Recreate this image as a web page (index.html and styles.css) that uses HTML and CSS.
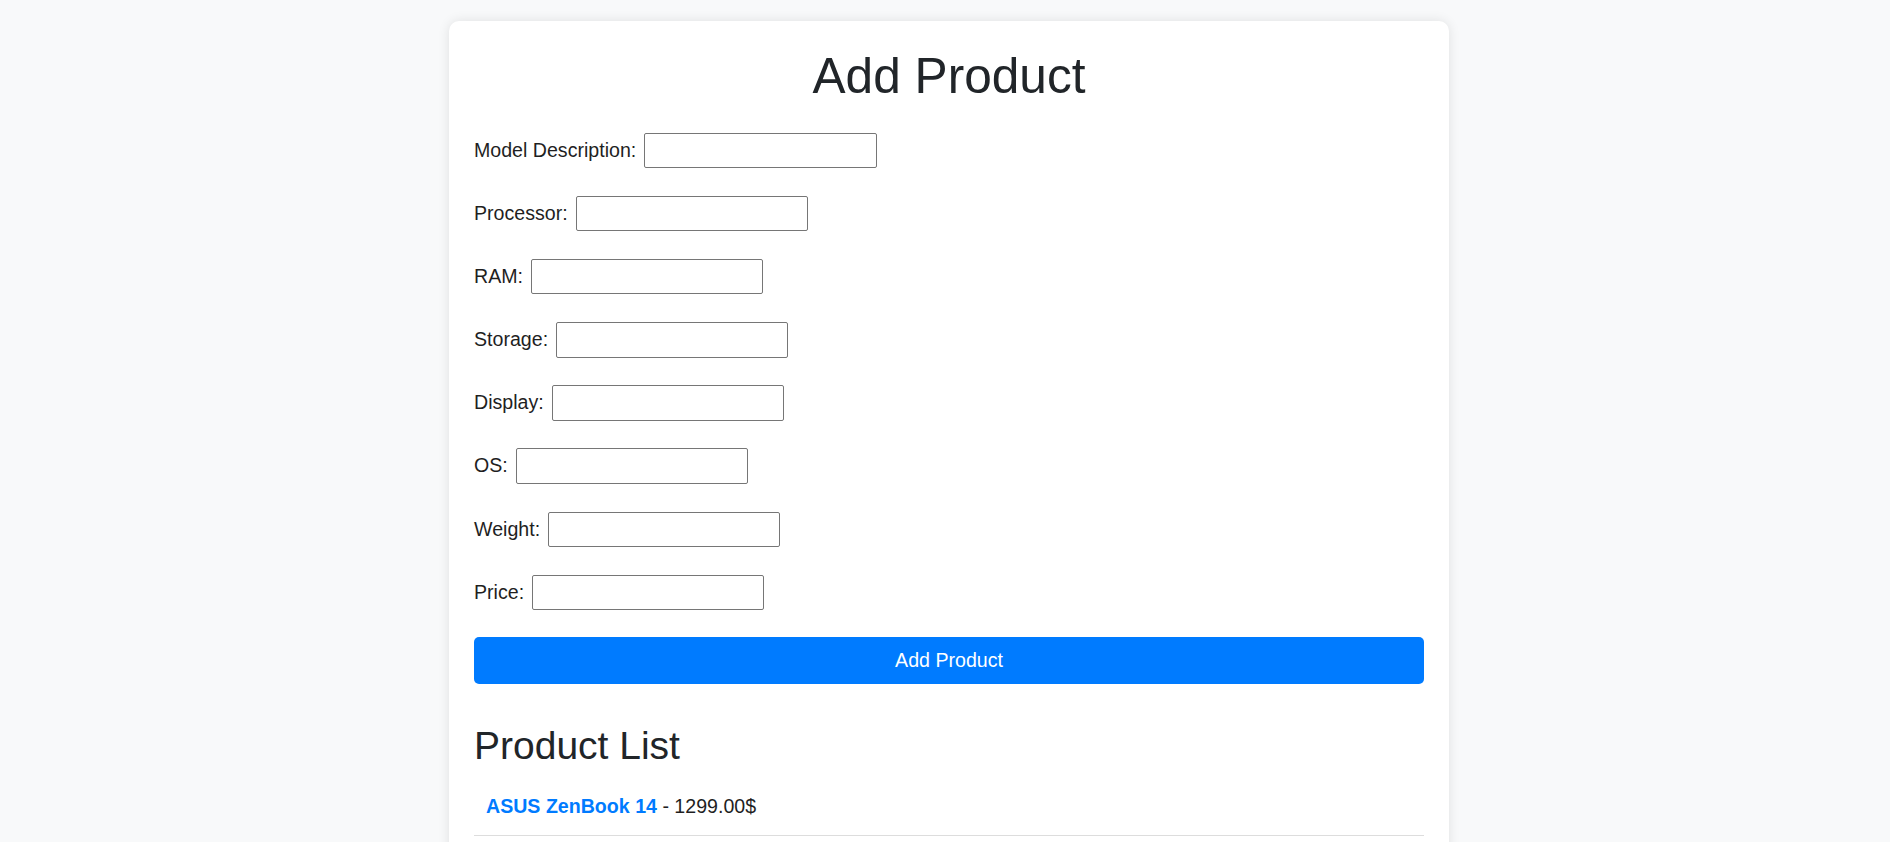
FILE: index.html
```html
<!DOCTYPE html>
<html lang="en">
<head>
<meta charset="utf-8">
<title>Add Product</title>
<link rel="stylesheet" href="styles.css">
</head>
<body>
<div class="card">
  <h1 class="title">Add Product</h1>
  <form class="form">
    <div class="row"><label for="model">Model Description:</label><input id="model" type="text"></div>
    <div class="row"><label for="cpu">Processor:</label><input id="cpu" type="text"></div>
    <div class="row"><label for="ram">RAM:</label><input id="ram" type="text"></div>
    <div class="row"><label for="storage">Storage:</label><input id="storage" type="text"></div>
    <div class="row"><label for="display">Display:</label><input id="display" type="text"></div>
    <div class="row"><label for="os">OS:</label><input id="os" type="text"></div>
    <div class="row"><label for="weight">Weight:</label><input id="weight" type="text"></div>
    <div class="row"><label for="price">Price:</label><input id="price" type="text"></div>
    <button class="btn" type="button">Add Product</button>
  </form>
  <h2 class="subtitle">Product List</h2>
  <ul class="list">
    <li class="item"><a class="item-link" href="#">ASUS ZenBook 14</a> - 1299.00$</li>
  </ul>
</div>
</body>
</html>
```
FILE: styles.css
```css
html, body {
  margin: 0;
  padding: 0;
}
body {
  background: #f8f9fa;
  font-family: "Liberation Sans", Arial, sans-serif;
  color: #212529;
  padding: 20.5px 0 0 8px;
}
.card {
  width: 1000px;
  box-sizing: border-box;
  margin: 0 auto;
  background: #fff;
  border-radius: 10px;
  box-shadow: 0 0 12px rgba(0, 0, 0, 0.1);
  padding: 26px 25px 40px;
}
.title {
  margin: 0 0 26.5px;
  font-size: 49.6px;
  font-weight: normal;
  line-height: 1.2;
  text-align: center;
  color: #212529;
}
.form {
  display: flex;
  flex-direction: column;
  gap: 27.6px;
}
.row {
  display: flex;
  align-items: center;
  gap: 8px;
  font-size: 19.6px;
  line-height: 1.2;
  height: 35.6px;
}
.row label {
  color: #1f1f1f;
}
.row input {
  box-sizing: border-box;
  width: 232.4px;
  height: 35.6px;
  margin: 0;
  border: 1px solid #767676;
  border-radius: 2px;
  background: #fff;
  font-family: inherit;
  font-size: 16px;
  padding: 2px 4px;
}
.btn {
  display: block;
  width: 100%;
  height: 47px;
  margin-top: -0.6px;
  border: none;
  border-radius: 5px;
  background: #007bff;
  color: #fff;
  font-family: "Liberation Sans", Arial, sans-serif;
  font-size: 19.6px;
  line-height: 1;
  cursor: pointer;
}
.subtitle {
  margin: 39px 0 0;
  font-size: 39px;
  font-weight: normal;
  line-height: 1.2;
  color: #212529;
}
.list {
  list-style: none;
  margin: 12.4px 0 0;
  padding: 0;
}
.item {
  font-size: 19.6px;
  line-height: 1.2;
  padding: 12.5px 12px 16.5px;
  border-bottom: 1px solid #dddddd;
  color: #1f1f1f;
}
.item-link {
  color: #007bff;
  font-weight: bold;
  text-decoration: none;
}
```
